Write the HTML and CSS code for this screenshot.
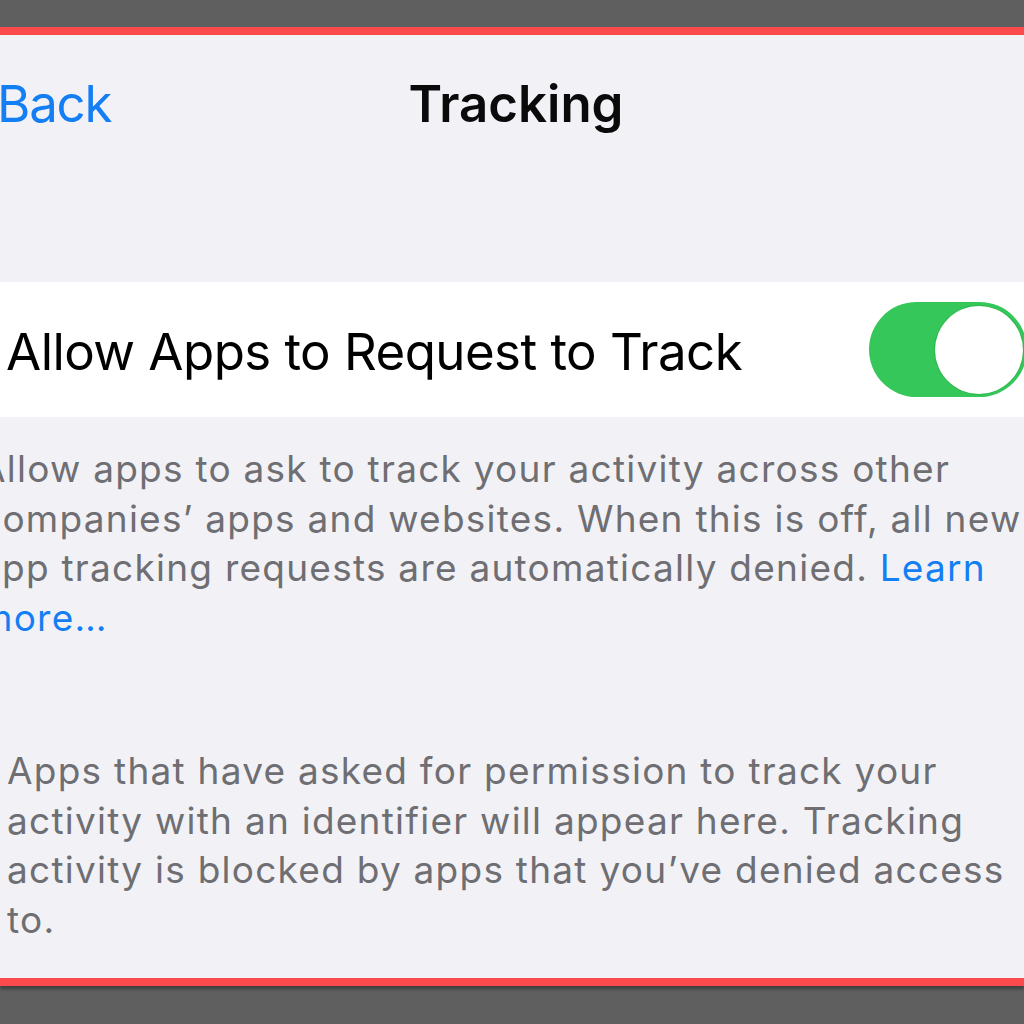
FILE: index.html
```html
<!DOCTYPE html>
<html lang="en">
<head>
<meta charset="utf-8">
<title>Tracking</title>
<link rel="stylesheet" href="styles.css">
</head>
<body>
<div class="frame">
  <div class="panel">
    <header class="nav">
      <span class="back">Back</span>
      <span class="title">Tracking</span>
      <span class="spacer"></span>
    </header>
    <section class="row">
      <span class="label">Allow Apps to Request to Track</span>
      <span class="toggle"><span class="knob"></span></span>
    </section>
    <p class="footer first">
      <span class="line">Allow apps to ask to track your activity across other</span>
      <span class="line">companies’ apps and websites. When this is off, all new</span>
      <span class="line">app tracking requests are automatically denied. <span class="link">Learn</span></span>
      <span class="line"><span class="link">more…</span></span>
    </p>
    <p class="footer second">
      <span class="line">Apps that have asked for permission to track your</span>
      <span class="line">activity with an identifier will appear here. Tracking</span>
      <span class="line">activity is blocked by apps that you’ve denied access</span>
      <span class="line">to.</span>
    </p>
  </div>
</div>
</body>
</html>
```

FILE: styles.css
```css
html, body {
  margin: 0;
  padding: 0;
  background: #5f5f60;
  width: 1024px;
  height: 1024px;
  overflow: hidden;
}

.frame {
  padding-top: 27px;
}

.panel {
  background: #f2f2f6;
  border-top: 8px solid #fb4a4c;
  border-bottom: 8px solid #fb4a4c;
  height: 943px;
  overflow: hidden;
  font-family: Inter, "Noto Sans", sans-serif;
  box-shadow: 0 3px 3px rgba(0, 0, 0, 0.35);
}

.nav {
  display: grid;
  grid-template-columns: 1fr auto 1fr;
  align-items: center;
  height: 60px;
  line-height: 60px;
  font-size: 51px;
  padding-top: 39px;
}

.back {
  color: #147ef5;
  margin-left: -3px;
  letter-spacing: -1.2px;
}

.title {
  color: #0a0a0a;
  font-weight: 600;
  padding-left: 8px;
}

.row {
  margin-top: 148px;
  height: 135px;
  background: #ffffff;
  display: flex;
  align-items: center;
  justify-content: space-between;
  padding-left: 6px;
}

.label {
  font-size: 51px;
  letter-spacing: -0.55px;
  color: #000000;
  padding-top: 3px;
  white-space: nowrap;
}

.toggle {
  position: relative;
  flex: none;
  width: 158px;
  height: 95px;
  border-radius: 48px;
  background: #35c759;
  margin-right: -3px;
}

.knob {
  position: absolute;
  right: 4px;
  top: 3.5px;
  width: 88px;
  height: 88px;
  border-radius: 50%;
  background: #ffffff;
  box-shadow: 0 0 0 1px #2fb84f;
}

.footer {
  margin: 0;
  font-size: 37px;
  line-height: 49.5px;
  letter-spacing: 1.25px;
  color: #6e6e73;
}

.footer .line {
  display: block;
  white-space: nowrap;
}

.first {
  margin-top: 27px;
  margin-left: -20px;
}

.second {
  margin-top: 104px;
  margin-left: 7px;
}

.link {
  color: #147ef5;
}
```
